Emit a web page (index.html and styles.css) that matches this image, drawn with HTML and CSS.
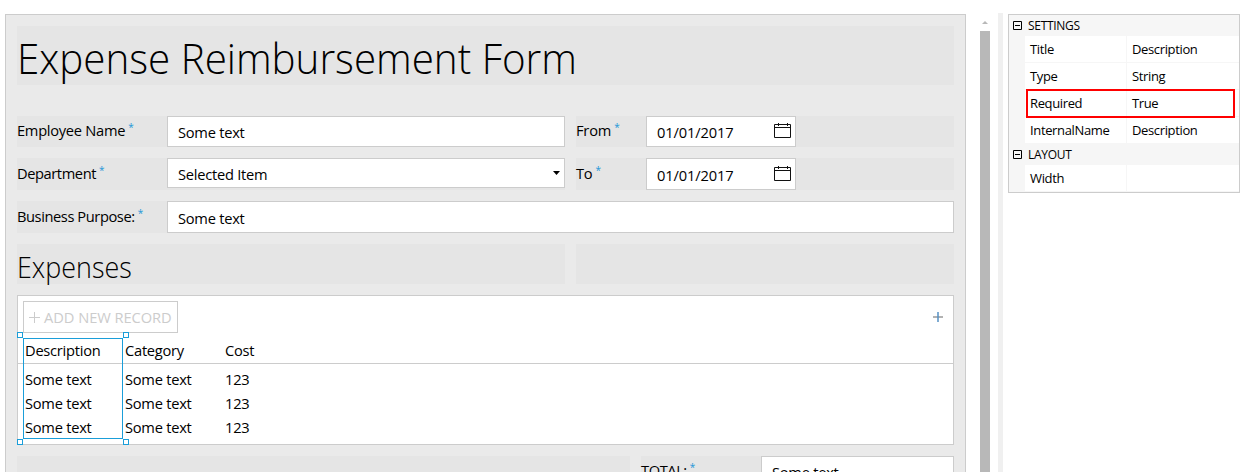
FILE: index.html
```html
<!DOCTYPE html>
<html lang="en">
<head>
<meta charset="utf-8">
<title>Expense Reimbursement Form</title>
<link rel="stylesheet" href="styles.css">
</head>
<body>
<div class="designer">
  <main class="form">
    <h1 class="form-title"><span>Expense Reimbursement Form</span></h1>
    <div class="row row-name">
      <div class="label"><span>Employee Name</span><sup>*</sup></div>
      <div class="input"><span>Some text</span></div>
      <div class="label label-gap"><span>From</span><sup>*</sup></div>
      <div class="input date"><span>01/01/2017</span><svg class="calendar" width="17" height="16" viewBox="0 0 17 16"><path d="M.5 2.5h16v13H.5zM1 5.5h15M4.5 1v3M13.5 1v3"/></svg></div>
      <div class="fill"></div>
    </div>
    <div class="row row-dept">
      <div class="label label-tight"><span>Department</span><sup>*</sup></div>
      <div class="input-cell"><div class="input select"><span>Selected Item</span><svg class="caret" width="7" height="4" viewBox="0 0 7 4"><path d="M0 0h7L3.5 4z"/></svg></div></div>
      <div class="label label-gap"><span>To</span><sup>*</sup></div>
      <div class="input date"><span>01/01/2017</span><svg class="calendar" width="17" height="16" viewBox="0 0 17 16"><path d="M.5 2.5h16v13H.5zM1 5.5h15M4.5 1v3M13.5 1v3"/></svg></div>
      <div class="fill"></div>
    </div>
    <div class="row row-purpose">
      <div class="label label-tight"><span>Business Purpose:</span><sup>*</sup></div>
      <div class="input"><span>Some text</span></div>
    </div>
    <div class="row row-expenses">
      <h2 class="section-title"><span>Expenses</span></h2>
      <div class="fill"></div>
    </div>
    <section class="grid">
      <div class="toolbar">
        <div class="add-button"><svg width="11" height="11" viewBox="0 0 11 11"><path d="M5.5 0v11M0 5.5h11"/></svg><span>ADD NEW RECORD</span></div>
        <svg class="add-column" width="10" height="10" viewBox="0 0 10 10"><path class="bar" d="M0 5h10"/><path d="M5 0v10"/></svg>
      </div>
      <div class="grid-row grid-head"><span>Description</span><span>Category</span><span>Cost</span></div>
      <div class="grid-body">
        <div class="grid-row"><span>Some text</span><span>Some text</span><span class="num">123</span></div>
        <div class="grid-row"><span>Some text</span><span>Some text</span><span class="num">123</span></div>
        <div class="grid-row"><span>Some text</span><span>Some text</span><span class="num">123</span></div>
      </div>
      <div class="selection"><i class="handle tl"></i><i class="handle tr"></i><i class="handle bl"></i><i class="handle br"></i></div>
    </section>
    <div class="row row-total">
      <div class="fill"></div>
      <div class="label label-tight"><span>TOTAL:</span><sup>*</sup></div>
      <div class="input"><span>Some text</span></div>
    </div>
  </main>
  <div class="scrollbar"><svg width="6" height="3" viewBox="0 0 6 3"><path d="M0 3L3 0l3 3z"/></svg><div class="thumb"></div></div>
  <div class="splitter"></div>
  <aside class="panel">
    <div class="group"><svg width="9" height="9" viewBox="0 0 9 9"><path d="M.5.5h8v8h-8zM2 4.5h5"/></svg><span>SETTINGS</span></div>
    <div class="props">
      <div class="prop"><span>Title</span><span>Description</span></div>
      <div class="prop"><span>Type</span><span>String</span></div>
      <div class="prop required"><span>Required</span><span>True</span></div>
      <div class="prop"><span>InternalName</span><span>Description</span></div>
    </div>
    <div class="group"><svg width="9" height="9" viewBox="0 0 9 9"><path d="M.5.5h8v8h-8zM2 4.5h5"/></svg><span>LAYOUT</span></div>
    <div class="props">
      <div class="prop"><span>Width</span><span></span></div>
    </div>
  </aside>
</div>
</body>
</html>
```
FILE: styles.css
```css
*, *::after { box-sizing: border-box; }
html, body { margin: 0; height: 472px; overflow: hidden; background: #fff; }
body { font: 14.67px/20px "Open Sans", "Noto Sans", sans-serif; color: #000; white-space: nowrap; letter-spacing: -.25px; }
svg { display: block; flex: none; fill: none; stroke: #000; }
h1, h2 { margin: 0; font-weight: 300; letter-spacing: 0; }
h1 span, h2 span { display: inline-block; transform-origin: 0 50%; }

.designer { display: flex; height: 472px; padding: 13px 6px 0 5px; overflow: hidden; }
.form { width: 961px; height: 500px; flex: none; margin-top: 1px; padding: 11px; border: 1px solid #ccc; background: #eaeaea; }
.form-title { height: 59px; background: #e5e5e5; font-size: 43px; line-height: 63px; }
.form-title span { transform: scaleX(.938); }
.row { display: flex; width: 937px; margin-bottom: 11px; }
.row-name { height: 31px; margin-top: 31px; }
.row-dept, .row-purpose { height: 32px; }
.row-expenses { height: 40px; gap: 11px; }
.row-total { height: 32px; margin-top: 11px; }

.label { display: flex; width: 150px; flex: none; padding-top: 5px; background: #e5e5e5; letter-spacing: -.28px; }
.label sup { margin: -1px 0 0 3px; color: #1e96d8; font-size: 10px; line-height: 16px; }
.label-tight { letter-spacing: -.42px; }
.label-gap { width: 70px; margin-left: 11px; letter-spacing: -.2px; }
.row-name .label { padding-top: 4px; }
.input { display: flex; align-items: center; justify-content: space-between; width: 398px; padding: 2px 4px 0 10px; border: 1px solid #ccc; background: #fff; }
.row-name .input { padding-top: 1px; }
.input-cell { width: 398px; background: #e5e5e5; }
.date { width: 150px; padding-left: 10px; letter-spacing: -.12px; }
.select { height: 30px; }
.calendar { margin-top: -4px; stroke: #111; }
.caret { fill: #000; stroke: none; margin-top: -3px; }
.fill { flex: 1; background: #e5e5e5; }
.row-purpose .input { width: 787px; }
.section-title { width: 548px; background: #e5e5e5; font-size: 29.3px; line-height: 46px; }
.section-title span { transform: scaleX(.918); }
.row-total .fill { flex: 0 0 613px; margin-right: 11px; }
.row-total .label { width: 120px; padding-top: 4px; }
.row-total .input { width: 193px; padding-top: 0; }

.grid { position: relative; width: 937px; height: 150px; border: 1px solid #ccc; background: #fff; }
.toolbar { display: flex; justify-content: space-between; padding: 5px 10px 0 5px; height: 42px; }
.add-button { display: flex; align-items: center; gap: 4px; width: 155px; height: 32px; padding-left: 5px; border: 1px solid #ccc; color: #ccc; letter-spacing: -.05px; }
.add-button svg { stroke: #ccc; }
.add-column { margin-top: 11px; stroke: #5590c4; stroke-width: 1.5; }
.add-column .bar { stroke: #999; }
.grid-row { display: flex; height: 24px; padding-left: 7px; line-height: 24px; }
.grid-row span { width: 100px; }
.grid-head { height: 26px; border-bottom: 1px solid #ccc; }
.grid-body { padding-top: 3px; }
.selection { position: absolute; left: 5px; top: 42px; width: 100px; height: 101px; border: 1px solid #1a9ed9; }
.handle { position: absolute; width: 6px; height: 6px; border: 1px solid #1a9ed9; background: #fff; }
.tl { left: -7px; top: -7px; }
.tr { right: -7px; top: -7px; }
.bl { left: -7px; bottom: -7px; }
.br { right: -7px; bottom: -7px; }

.scrollbar { display: flex; flex-direction: column; align-items: center; gap: 7px; width: 10px; margin-left: 14px; padding-top: 8px; }
.scrollbar svg { fill: #b8b8b8; stroke: none; }
.thumb { width: 10px; flex: 1; background: #b8b8b8; }
.splitter { width: 5px; margin-left: 8px; background: #f0f0f0; }

.panel { width: 232px; height: 179px; margin: 1px 0 0 5px; border: 1px solid #ccc; background: #f6f6f6; font-size: 13px; letter-spacing: -.36px; }
.group { display: flex; align-items: center; height: 21px; padding-left: 4px; gap: 6px; font-size: 12px; letter-spacing: -.3px; }
.props { margin-left: 16px; }
.prop { display: grid; grid-template-columns: 101px 1fr; gap: 1px; height: 27px; padding-bottom: 1px; line-height: 26px; }
.prop span { padding-left: 5px; background: #fff; }
.required { position: relative; }
.required::after { content: ""; position: absolute; left: 1px; top: -1px; width: 209px; height: 29px; border: 2px solid #f00; }
```
